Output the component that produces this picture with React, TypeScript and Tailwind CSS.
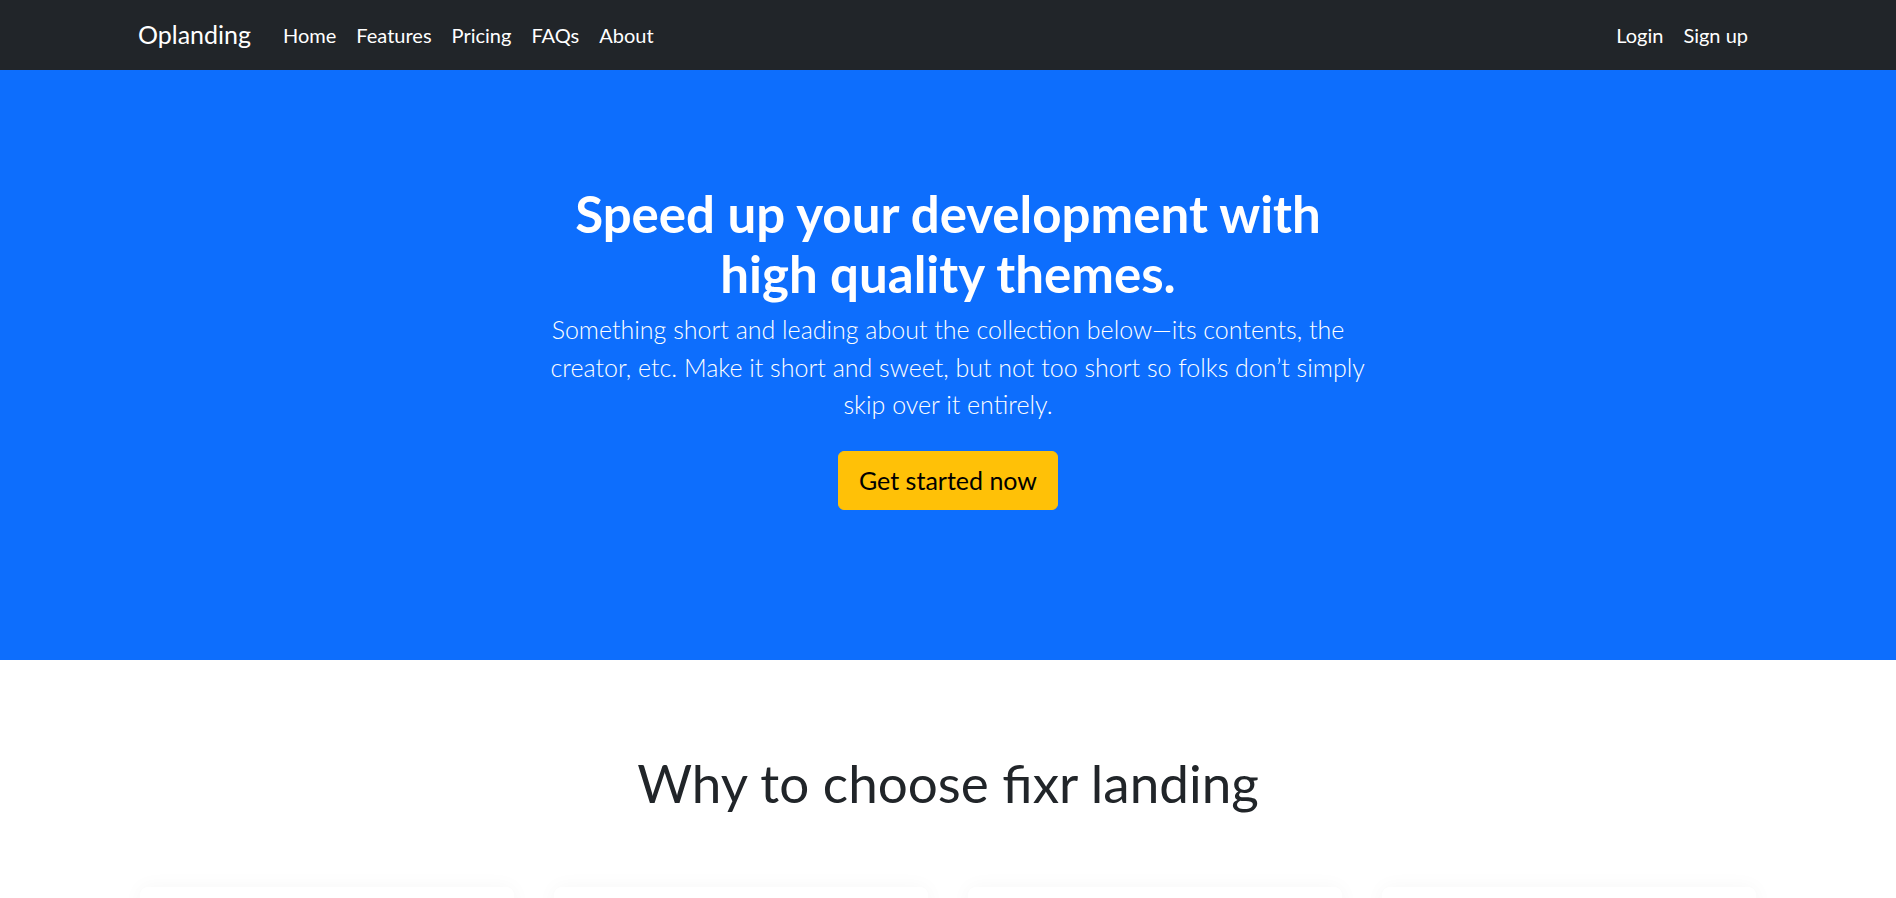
import React from "react";

const navLinks = ["Home", "Features", "Pricing", "FAQs", "About"];

function Navbar() {
  return (
    <nav className="bg-[#212529] h-[70px]">
      <div className="mx-auto max-w-[1650px] px-[15px] h-full flex items-center">
        <a href="#" className="text-white text-[25px] mr-[22px]">
          Oplanding
        </a>
        <ul className="flex items-center">
          {navLinks.map((link) => (
            <li key={link}>
              <a href="#" className="block px-[10px] text-[20px] text-white">
                {link}
              </a>
            </li>
          ))}
        </ul>
        <ul className="flex items-center ml-auto">
          <li>
            <a href="#" className="block px-[10px] text-[20px] text-white">
              Login
            </a>
          </li>
          <li>
            <a href="#" className="block px-[10px] text-[20px] text-white">
              Sign up
            </a>
          </li>
        </ul>
      </div>
    </nav>
  );
}

function Hero() {
  return (
    <section className="bg-[#0d6efd] text-center pt-[114px] pb-[150px]">
      <div className="mx-auto w-[795px]">
        <h1 className="text-white font-bold text-[51px] leading-[60px] mb-[7px] whitespace-nowrap">
          Speed up your development with
          <br />
          high quality themes.
        </h1>
        <p className="text-white font-light text-[25px] leading-[37.5px] mb-[27px] whitespace-nowrap">
          Something short and leading about the collection below—its contents, the
          <br />
          creator, etc. Make it short and sweet, but not too short so folks don’t simply
          <br />
          skip over it entirely.
        </p>
        <button className="bg-[#ffc107] text-black text-[25px] leading-[37.5px] px-[20px] py-[10px] rounded-[6px] border border-[#ffc107]">
          Get started now
        </button>
      </div>
    </section>
  );
}

function Why() {
  return (
    <section className="pt-[90px]">
      <h2 className="text-center text-[#212529] font-normal text-[53px] leading-[66px]">
        Why to choose fixr landing
      </h2>
      <div className="mx-auto max-w-[1650px] px-[17px] mt-[71px] grid grid-cols-4 gap-[40px]">
        {[1, 2, 3, 4].map((n) => (
          <div
            key={n}
            className="h-[200px] rounded-[8px] bg-white shadow-[0_0_20px_rgba(0,0,0,0.04)]"
          ></div>
        ))}
      </div>
    </section>
  );
}

export default function App() {
  return (
    <div className="min-h-screen bg-white font-['Segoe_UI','Lato',sans-serif]">
      <Navbar />
      <Hero />
      <Why />
    </div>
  );
}
